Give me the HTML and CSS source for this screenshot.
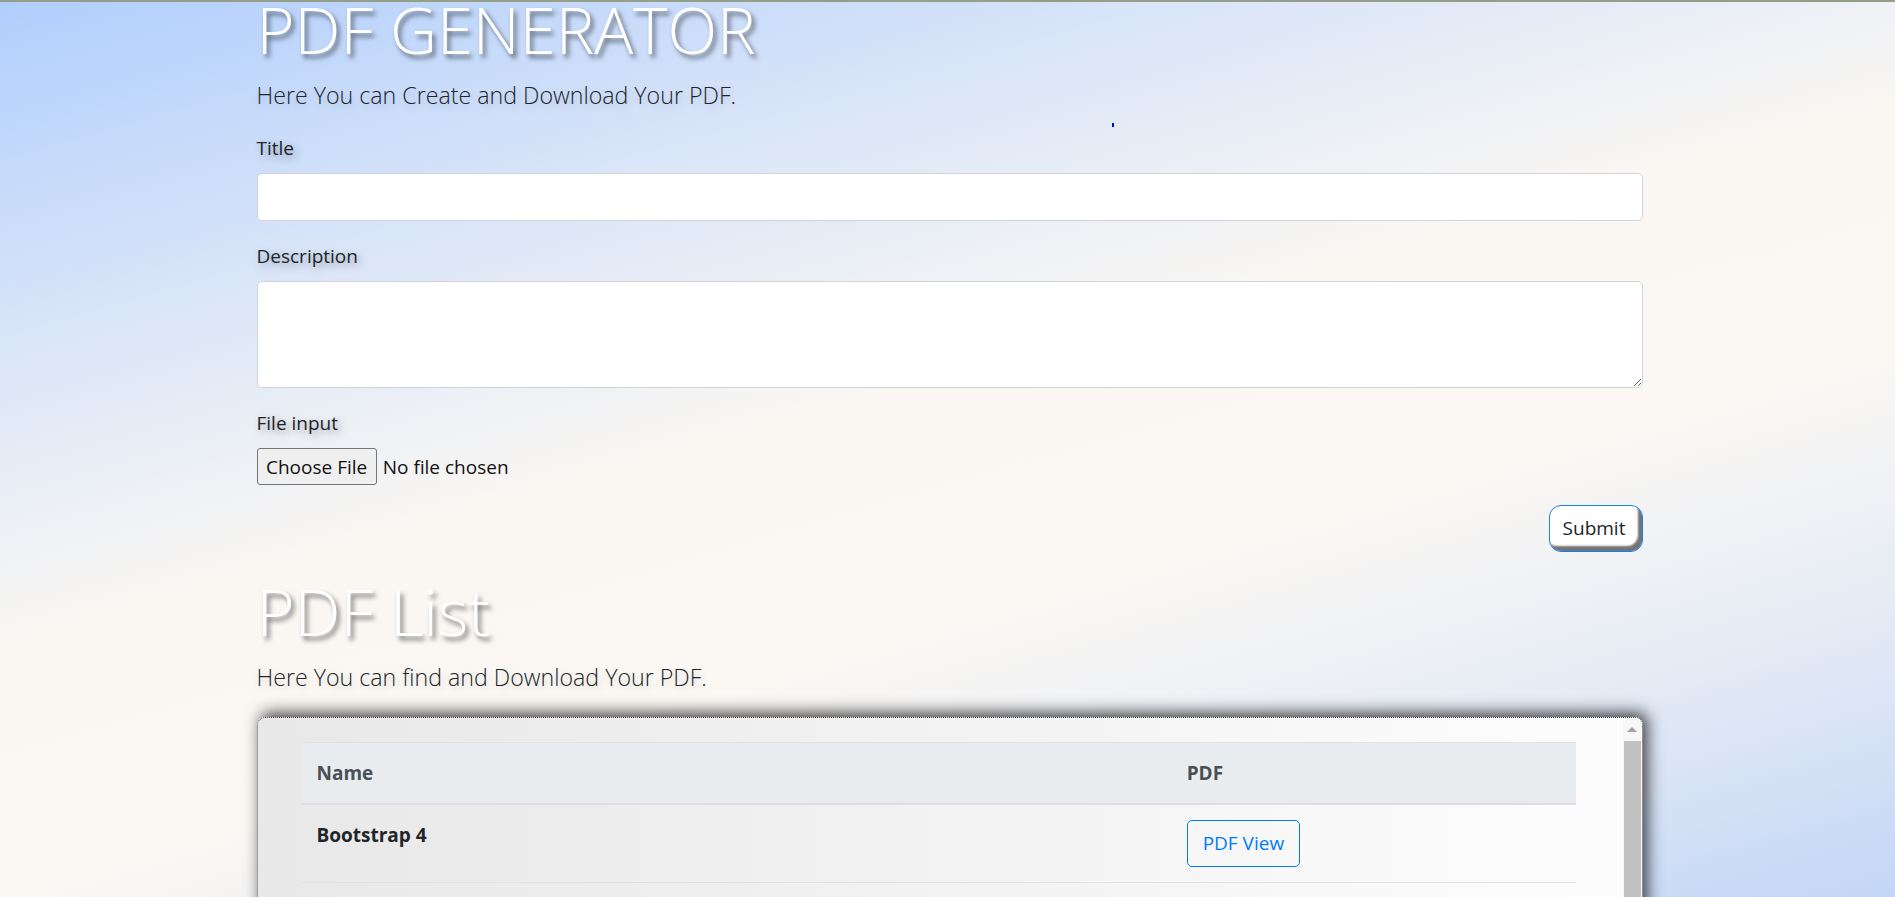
FILE: index.html
```html
<!DOCTYPE html>
<html lang="en">
<head>
<meta charset="utf-8">
<title>PDF Generator</title>
<link rel="stylesheet" href="styles.css">
</head>
<body>
<div class="topline"></div>
<span class="caret-mark"></span>
<main class="container">
  <section class="generator">
    <h1 class="display">PDF GENERATOR</h1>
    <p class="lead">Here You can Create and Download Your PDF.</p>
    <form class="pdf-form">
      <div class="form-group">
        <label for="title">Title</label>
        <input id="title" class="form-control" type="text">
      </div>
      <div class="form-group">
        <label for="desc">Description</label>
        <textarea id="desc" class="form-control textarea" rows="3"></textarea>
      </div>
      <div class="form-group">
        <label for="file">File input</label>
        <input id="file" class="form-control-file" type="file">
      </div>
      <div class="form-actions">
        <button type="button" class="btn-submit">Submit</button>
      </div>
    </form>
  </section>
  <section class="list">
    <h1 class="display">PDF List</h1>
    <p class="lead">Here You can find and Download Your PDF.</p>
    <div class="card">
      <div class="card-body">
        <table class="table">
          <thead>
            <tr><th class="col-name">Name</th><th class="col-pdf">PDF</th></tr>
          </thead>
          <tbody>
            <tr><th class="row-name">Bootstrap 4</th><td><a class="btn-outline" href="#">PDF View</a></td></tr>
          </tbody>
        </table>
      </div>
      <div class="scrollbar">
        <div class="scroll-arrow"><span class="tri"></span></div>
        <div class="scroll-thumb"></div>
      </div>
    </div>
  </section>
</main>
</body>
</html>
```

FILE: styles.css
```css
html, body {
  height: 100%;
}

body {
  margin: 0;
  overflow: hidden;
  font-family: "Open Sans", "Segoe UI", "Liberation Sans", sans-serif;
  font-size: 19px;
  line-height: 30px;
  color: #212529;
  background: linear-gradient(164deg, #b0cefd 0%, #dbe6f8 25%, #faf7f3 45%, #fbf8f4 62%, #e5ebf5 80%, #c3d6f6 100%);
}

.topline {
  height: 2px;
  background: #959e88;
}

.caret-mark {
  position: absolute;
  left: 1112px;
  top: 123px;
  width: 2px;
  height: 4px;
  background: #0000ff;
}

.container {
  box-sizing: border-box;
  width: 1390px;
  padding-left: 4px;
  margin: 0 auto;
}

.display {
  font-weight: 300;
  font-size: 65px;
  line-height: 84px;
  color: #ffffff;
  text-shadow: 3px 4px 5px rgba(0, 0, 0, 0.55);
  margin: 0 0 6px;
}

.generator .display {
  margin-top: -15px;
}

.lead {
  font-size: 23.2px;
  font-weight: 300;
  line-height: 37.5px;
  margin: 0 0 20px;
  text-shadow: 2px 3px 8px rgba(0, 0, 0, 0.15);
}

.generator .lead {
  margin-bottom: 18px;
}

.form-group {
  margin-bottom: 20px;
}

.form-group label {
  display: block;
  margin-bottom: 10px;
  text-shadow: 3px 3px 8px rgba(0, 0, 0, 0.35);
}

.form-control {
  display: block;
  width: 100%;
  box-sizing: border-box;
  height: 48px;
  padding: 7.5px 15px;
  font: inherit;
  color: #495057;
  border: 1px solid #ced4da;
  border-radius: 5px;
  background: #ffffff;
}

.textarea {
  height: 107.5px;
  resize: vertical;
}

.form-control-file {
  display: block;
  width: 100%;
  height: 37px;
  font-family: inherit;
  font-size: 19px;
  color: #111;
}

.form-control-file::file-selector-button {
  font: inherit;
  height: 37px;
  padding: 0 8.5px;
  margin-right: 6px;
  border: 1px solid #767676;
  border-radius: 3px;
  background: #efefef;
  color: #111;
}

.form-actions {
  display: flex;
  justify-content: flex-end;
}

.btn-submit {
  font: inherit;
  color: #212529;
  height: 47px;
  width: 94px;
  padding: 0 3px 2px 0;
  background: #ffffff;
  border: 1px solid #1a7ef5;
  border-radius: 12px;
  box-shadow: inset -4px -5px 2px #747474;
}

.list {
  margin-top: 17px;
}

.card {
  display: flex;
  height: 400px;
  border: 1px dotted #3f3f3f;
  border-radius: 8px;
  background: linear-gradient(90deg, #e8e8e8, #fdfdfd);
  box-shadow: 4px -4px 16px rgba(0, 0, 0, 0.75);
  overflow: hidden;
}

.card-body {
  flex: 1;
  padding: 24px 47px 0 44px;
}

.scrollbar {
  width: 19px;
  display: flex;
  flex-direction: column;
  background: #f7f7f7;
}

.scroll-arrow {
  height: 23px;
  display: flex;
  justify-content: center;
  align-items: center;
}

.tri {
  width: 0;
  height: 0;
  border-left: 5px solid transparent;
  border-right: 5px solid transparent;
  border-bottom: 5px solid #a3a3a3;
}

.scroll-thumb {
  flex: 0 0 300px;
  margin: 0 1px;
  background: #c1c1c1;
}

.table {
  width: 100%;
  border-collapse: collapse;
}

.table th,
.table td {
  padding: 15px;
  text-align: left;
  vertical-align: top;
  border-top: 1px solid #dee2e6;
  border-bottom: 1px solid #dee2e6;
}

.table thead th {
  background: #e9ecef;
  color: #495057;
  font-weight: 700;
  vertical-align: bottom;
  border-bottom: 2px solid #dedde6;
}

.col-name {
  width: 68.3%;
}

.row-name {
  font-weight: 700;
  color: #212529;
}

.btn-outline {
  display: inline-block;
  padding: 7.5px 15px;
  border: 1px solid #007bff;
  border-radius: 5px;
  color: #007bff;
  text-decoration: none;
  line-height: 30px;
}
```
